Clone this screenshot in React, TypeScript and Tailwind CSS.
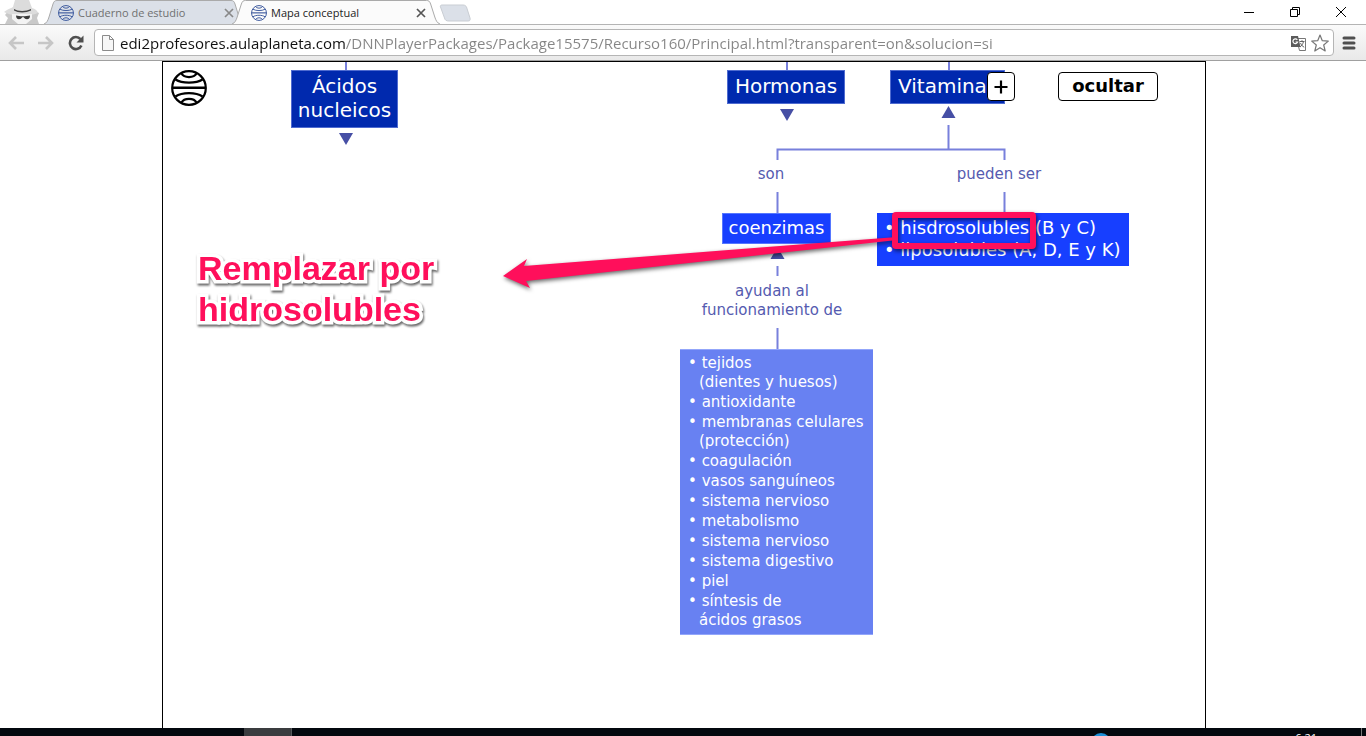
import type { ReactNode } from "react";

function GlobeIcon({ className }: { className: string }) {
  return (
    <svg viewBox="0 0 36 36" className={className} fill="none" stroke="currentColor" strokeWidth="2.2" aria-hidden="true">
      <circle cx="18" cy="18" r="16.8" />
      <path d="M1 17.7H35" strokeWidth="2.6" />
      <path d="M4.5 9.5C11 13.6 25 13.6 31.500 9.500" />
      <path d="M10.500 3.500C13 8.200 23 8.200 25.500 3.500" />
      <path d="M4.500 26.500C11 22 25 22 31.500 26.500" />
      <path d="M10.500 32.500C13 27.600 23 27.600 25.500 32.500" />
    </svg>
  );
}

function IncognitoIcon() {
  return (
    <svg viewBox="0 0 36 24" className="h-6 w-9 shrink-0" aria-hidden="true">
      <path d="M5 10L1 15L4 18L1 24H35L33 18L35 13L29 10Z" fill="#c9c9c9" />
      <path d="M0 12C5 8 8 8 9 7L11 0H25L28 8C31 9 33 10 34 13C28 16 8 17 0 12Z" fill="#dcdcdc" />
      <path d="M8 14V19L14 24H22L28 19V14Z" fill="#f3f3f3" />
      <path d="M10 9C14 11.500 22 11.500 27 9V10.500C22 13 14 13 10 10.500Z" fill="#444" />
      <path d="M12 15.500C14 16 16 16.200 18.500 16.200C21 16.200 24 16 26 15.500C26 18 25 19.200 23 19.200C21.500 19.200 20.500 18.500 19.700 17.200H18.200C17.500 18.500 16.500 19.200 15 19.200C13 19.200 12.200 18 12 15.500Z" fill="#3a3a3a" />
    </svg>
  );
}

function Tab({ title, active }: { title: string; active?: boolean }) {
  return (
    <div className={active ? "relative z-10 -ml-3 flex h-6 w-52 items-center pt-0.5 pl-[19px] pr-3.5" : "relative flex h-6 w-[200px] items-center pt-0.5 pl-3.5 pr-2.5"}>
      <svg viewBox="0 0 200 24" preserveAspectRatio="none" className="absolute inset-0 h-full w-full" aria-hidden="true">
        <path
          d="M0 24C3 23 4 20 5 17L9 4C10 1 11 0.500 13 0.500H187C189 0.500 190 1 191 4L195 17C196 20 197 23 200 24"
          fill={active ? "#fbfbfb" : "#dbe0e8"}
          stroke="#aaaaaa"
          vectorEffect="non-scaling-stroke"
        />
      </svg>
      <button type="button" className="relative flex flex-1 items-center gap-1 text-left">
        <GlobeIcon className="h-4 w-4 shrink-0 text-[#3d5a9e]" />
        <span className={active ? "text-[11px] leading-4 text-[#222]" : "text-[11px] leading-4 text-[#707070]"}>{title}</span>
      </button>
      <button type="button" aria-label={"Cerrar " + title} className={active ? "relative text-[#555]" : "relative text-[#888]"}>
        <svg viewBox="0 0 10 10" className="h-2.5 w-2.5" stroke="currentColor" strokeWidth="1.700" aria-hidden="true">
          <path d="M1 1L9 9M9 1L1 9" />
        </svg>
      </button>
    </div>
  );
}

function TabStrip() {
  return (
    <header className="flex h-6 items-center bg-white pl-1">
      <IncognitoIcon />
      <nav className="ml-1 flex flex-1 items-center" aria-label="Pestañas">
        <Tab title="Cuaderno de estudio" />
        <Tab title="Mapa conceptual" active />
        <button type="button" aria-label="Nueva pestaña" className="pt-0.5">
          <svg viewBox="0 0 34 18" className="-ml-0.5 h-[18px] w-[34px]" aria-hidden="true">
            <path d="M4 1H25C27 1 28 2 28.500 3L32 14C32.500 16 32 17 30 17H11C8 17 7 16 6.500 14L2.500 3C2 2 2.500 1 4 1Z" fill="#dbe0e8" stroke="#c9cdd3" />
          </svg>
        </button>
      </nav>
      <div className="flex items-center gap-9 pr-5">
        <button type="button" aria-label="Minimizar">
          <svg viewBox="0 0 10 10" className="h-2.5 w-2.5" aria-hidden="true"><path d="M0 5.500H10" stroke="#000" /></svg>
        </button>
        <button type="button" aria-label="Restaurar">
          <svg viewBox="0 0 10 10" className="h-2.5 w-2.5" fill="none" stroke="#000" aria-hidden="true">
            <path d="M0.500 2.500H7.500V9.500H0.500ZM2.500 2.500V0.500H9.500V7.500H7.500" />
          </svg>
        </button>
        <button type="button" aria-label="Cerrar">
          <svg viewBox="0 0 10 10" className="h-2.5 w-2.5" stroke="#000" aria-hidden="true"><path d="M0 0L10 10M10 0L0 10" /></svg>
        </button>
      </div>
    </header>
  );
}

function Toolbar() {
  return (
    <div className="flex h-[37px] items-center border-t border-b border-t-[#b4b4b4] border-b-[#a0a0a0] bg-linear-to-b from-[#fafafa] to-[#e9e9e9] pl-2 pr-2.5">
      <div className="flex items-center gap-3.5">
        <button type="button" aria-label="Atrás">
          <svg viewBox="0 0 16 14" className="h-3.5 w-4" fill="none" stroke="#c6c6c6" strokeWidth="2.600" aria-hidden="true"><path d="M16 7H2M8 1L2 7L8 13" /></svg>
        </button>
        <button type="button" aria-label="Adelante">
          <svg viewBox="0 0 16 14" className="h-3.5 w-4" fill="none" stroke="#c6c6c6" strokeWidth="2.600" aria-hidden="true"><path d="M0 7H14M8 1L14 7L8 13" /></svg>
        </button>
        <button type="button" aria-label="Recargar">
          <svg viewBox="0 0 16 16" className="h-4 w-4" aria-hidden="true">
            <path d="M12.500 4.200A6 6 0 1 0 13.400 10.500" fill="none" stroke="#4f4f4f" strokeWidth="2.600" />
            <path d="M15.500 0.500V7.500H8.500Z" fill="#4f4f4f" />
          </svg>
        </button>
      </div>
      <div className="ml-2.5 flex h-[27px] flex-1 items-center rounded-sm border border-[#b5b5b5] bg-white pl-[7px] pr-1">
        <svg viewBox="0 0 12 16" className="h-4 w-3 shrink-0" fill="#f7f7f7" stroke="#8b8b8b" aria-hidden="true">
          <path d="M0.500 0.500H7.500L11.500 4.500V15.500H0.500ZM7.500 0.500V4.500H11.500" />
        </svg>
        <input
          type="text"
          aria-label="Dirección"
          readOnly
          value="edi2profesores.aulaplaneta.com/DNNPlayerPackages/Package15575/Recurso160/Principal.html?transparent=on&solucion=si"
          className="ml-1.5 min-w-0 flex-1 bg-[linear-gradient(to_right,#111111_226px,#858585_226px)] bg-clip-text text-[15px] leading-5 text-transparent outline-none"
        />
        <button type="button" aria-label="Traducir esta página">
          <svg viewBox="0 0 17 16" className="h-4 w-[17px]" aria-hidden="true">
            <path d="M6.500 3.500H15.500V15.500H9.500Z" fill="#fff" stroke="#777" />
            <path d="M1 1H8L10.500 12H1Z" fill="#5c5c5c" />
            <path d="M7.300 4.800A2.400 2.400 0 1 0 7.600 7H5.500" fill="none" stroke="#fff" strokeWidth="1.200" />
            <path d="M9.500 6.500H14.500M12 5.200V6.500M13.500 6.500C13 9 11.500 11 10 12M10.500 8C11 9.500 12.500 11.500 14.200 12.200" fill="none" stroke="#666" />
          </svg>
        </button>
        <button type="button" aria-label="Añadir a marcadores" className="ml-1">
          <svg viewBox="0 0 18 18" className="h-[18px] w-[18px]" fill="#fff" stroke="#777" strokeWidth="1.200" strokeLinejoin="round" aria-hidden="true">
            <path d="M9 1L11.300 6.700L17.300 7.100L12.700 11L14.200 17L9 13.700L3.800 17L5.300 11L0.700 7.100L6.700 6.700Z" />
          </svg>
        </button>
      </div>
      <button type="button" aria-label="Menú" className="ml-2">
        <svg viewBox="0 0 14 14" className="h-3.5 w-3.5" stroke="#4f4f4f" strokeWidth="3" strokeLinecap="round" aria-hidden="true">
          <path d="M2 2H12M2 7H12M2 12H12" />
        </svg>
      </button>
    </div>
  );
}

function Node({ place, children }: { place: string; children: ReactNode }) {
  return <div className={"absolute text-white " + place}>{children}</div>;
}

function Connectors() {
  return (
    <svg viewBox="0 0 1042 660" className="absolute top-0 left-0 h-[660px] w-[1042px]" aria-hidden="true">
      <g fill="none" stroke="#7880dc" strokeWidth="2">
        <path d="M183 0V8M624 0V8M786 0V8" />
        <path d="M785.500 63V87.500M614.500 98V87.500H841.500V98" />
        <path d="M614.500 130V151M841.500 130V151M614.500 204V214M614.500 266V287" />
      </g>
      <g fill="#464fa5">
        <path d="M176 71H190L183 83Z" />
        <path d="M617 47H631L624 59Z" />
        <path d="M778.500 56H792.500L785.500 44Z" />
        <path d="M607.500 197H621.500L614.500 185Z" />
      </g>
    </svg>
  );
}

const benefits: string[][] = [
  ["tejidos", "(dientes y huesos)"],
  ["antioxidante"],
  ["membranas celulares", "(protección)"],
  ["coagulación"],
  ["vasos sanguíneos"],
  ["sistema nervioso"],
  ["metabolismo"],
  ["sistema nervioso"],
  ["sistema digestivo"],
  ["piel"],
  ["síntesis de", "ácidos grasos"],
];

function Annotation() {
  return (
    <>
      <svg viewBox="0 0 1042 660" className="pointer-events-none absolute top-0 left-0 h-[660px] w-[1042px] drop-shadow-[1px_2px_2px_rgba(0,0,0,0.6)]" aria-hidden="true">
        <rect x="732" y="153" width="138" height="31" rx="1" fill="none" stroke="#ff0f5b" strokeWidth="6" strokeLinejoin="round" />
        <path d="M340 214L364 197L361 204L734 175V178L363 219L367 226Z" fill="#ff0f5b" />
      </svg>
      <p className="absolute top-[186px] left-[35px] text-[34px] leading-[41px] font-bold whitespace-nowrap text-[#ff0f5b] [font-family:'Liberation_Sans',Arial,sans-serif] [paint-order:stroke_fill] [-webkit-text-stroke:7px_white] drop-shadow-[1px_2px_1px_rgba(0,0,0,0.6)]">
        Remplazar por
        <br />
        hidrosolubles
      </p>
    </>
  );
}

function ConceptMap() {
  return (
    <main className="flex min-h-0 flex-1 justify-center overflow-hidden bg-white pl-0.5 [font-family:Verdana,'DejaVu_Sans',sans-serif]">
      <section className="relative w-full max-w-[1044px] overflow-hidden border-x border-t border-black" aria-label="Mapa conceptual">
        <GlobeIcon className="absolute top-2 left-2 h-9 w-9 text-black" />
        <Connectors />
        <Node place="top-2 left-32 w-[107px] border border-[#4f6bd0] bg-[#0029ae] pt-[3px] pb-[5px] text-center text-xl leading-6">
          Ácidos
          <br />
          nucleicos
        </Node>
        <Node place="top-2 left-[564px] h-[34px] w-[118px] border border-[#4f6bd0] bg-[#0029ae] pt-[3px] text-center text-xl leading-6">Hormonas</Node>
        <Node place="top-2 left-[727px] h-[34px] w-[115px] border border-[#4f6bd0] bg-[#0029ae] pt-[3px] pl-[7px] text-xl leading-6">Vitaminas</Node>
        <button type="button" aria-label="Ampliar" className="absolute top-2.5 left-[824px] flex h-[29px] w-7 items-center justify-center rounded border border-black bg-white">
          <svg viewBox="0 0 14 14" className="h-3.5 w-3.5" stroke="#000" strokeWidth="2.200" aria-hidden="true"><path d="M7 0.500V13.500M0.500 7H13.500" /></svg>
        </button>
        <button type="button" className="absolute top-2.5 left-[895px] h-[29px] w-[100px] rounded border border-black bg-white pb-0.5 text-lg leading-6 font-bold text-black">
          ocultar
        </button>

        <p className="absolute top-[102px] left-[568px] w-20 text-center text-[15px] leading-5 text-[#555bb0]">son</p>
        <p className="absolute top-[102px] left-[776px] w-[120px] text-center text-[15px] leading-5 text-[#555bb0]">pueden ser</p>
        <p className="absolute top-[220px] left-[519px] w-[180px] text-center text-[15px] leading-[19px] text-[#555bb0]">
          ayudan al
          <br />
          funcionamiento de
        </p>

        <Node place="top-[151px] left-[559px] h-[31px] w-[109px] border border-[#5577ff] bg-[#173fff] pt-[3px] text-center text-lg leading-[22px]">coenzimas</Node>
        <Node place="top-[151px] left-[714px] w-[252px] bg-[#173fff] pt-1 pb-[5px] pl-[7px] text-lg leading-[22px] whitespace-nowrap">
          <ul>
            <li>• hisdrosolubles (B y C)</li>
            <li>• liposolubles (A, D, E y K)</li>
          </ul>
        </Node>
        <Node place="top-[287px] left-[517px] w-[193px] border-y border-[#93a6fa] bg-[#6881f2] pt-[3px] pb-1 pl-2 text-[15px] leading-5 whitespace-nowrap">
          <ul>
            {benefits.map(([first, second], i) => (
              <li key={i}>
                • {first}
                {second && <span className="block pl-[11px] leading-[19px]">{second}</span>}
              </li>
            ))}
          </ul>
        </Node>
        <Annotation />
      </section>
    </main>
  );
}

function Taskbar() {
  return (
    <footer className="flex h-2 items-start overflow-hidden bg-[#03080e] pr-1">
      <div className="ml-[244px] h-2 w-12 border-r border-[#55585c] bg-[#3a3c3f]" />
      <div className="flex-1" />
      <svg viewBox="0 0 20 20" className="mt-[5px] mr-[184px] h-5 w-5 shrink-0" aria-hidden="true"><circle cx="10" cy="10" r="10" fill="#1c8fd8" /></svg>
      <time className="mt-0.5 mr-11 text-[11px] leading-4 text-white">6:21</time>
      <div className="h-2 w-px bg-[#777]" />
    </footer>
  );
}

export default function App() {
  return (
    <div className="flex h-screen flex-col overflow-hidden bg-white [font-family:'Segoe_UI','Open_Sans','Noto_Sans',sans-serif]">
      <TabStrip />
      <Toolbar />
      <ConceptMap />
      <Taskbar />
    </div>
  );
}
